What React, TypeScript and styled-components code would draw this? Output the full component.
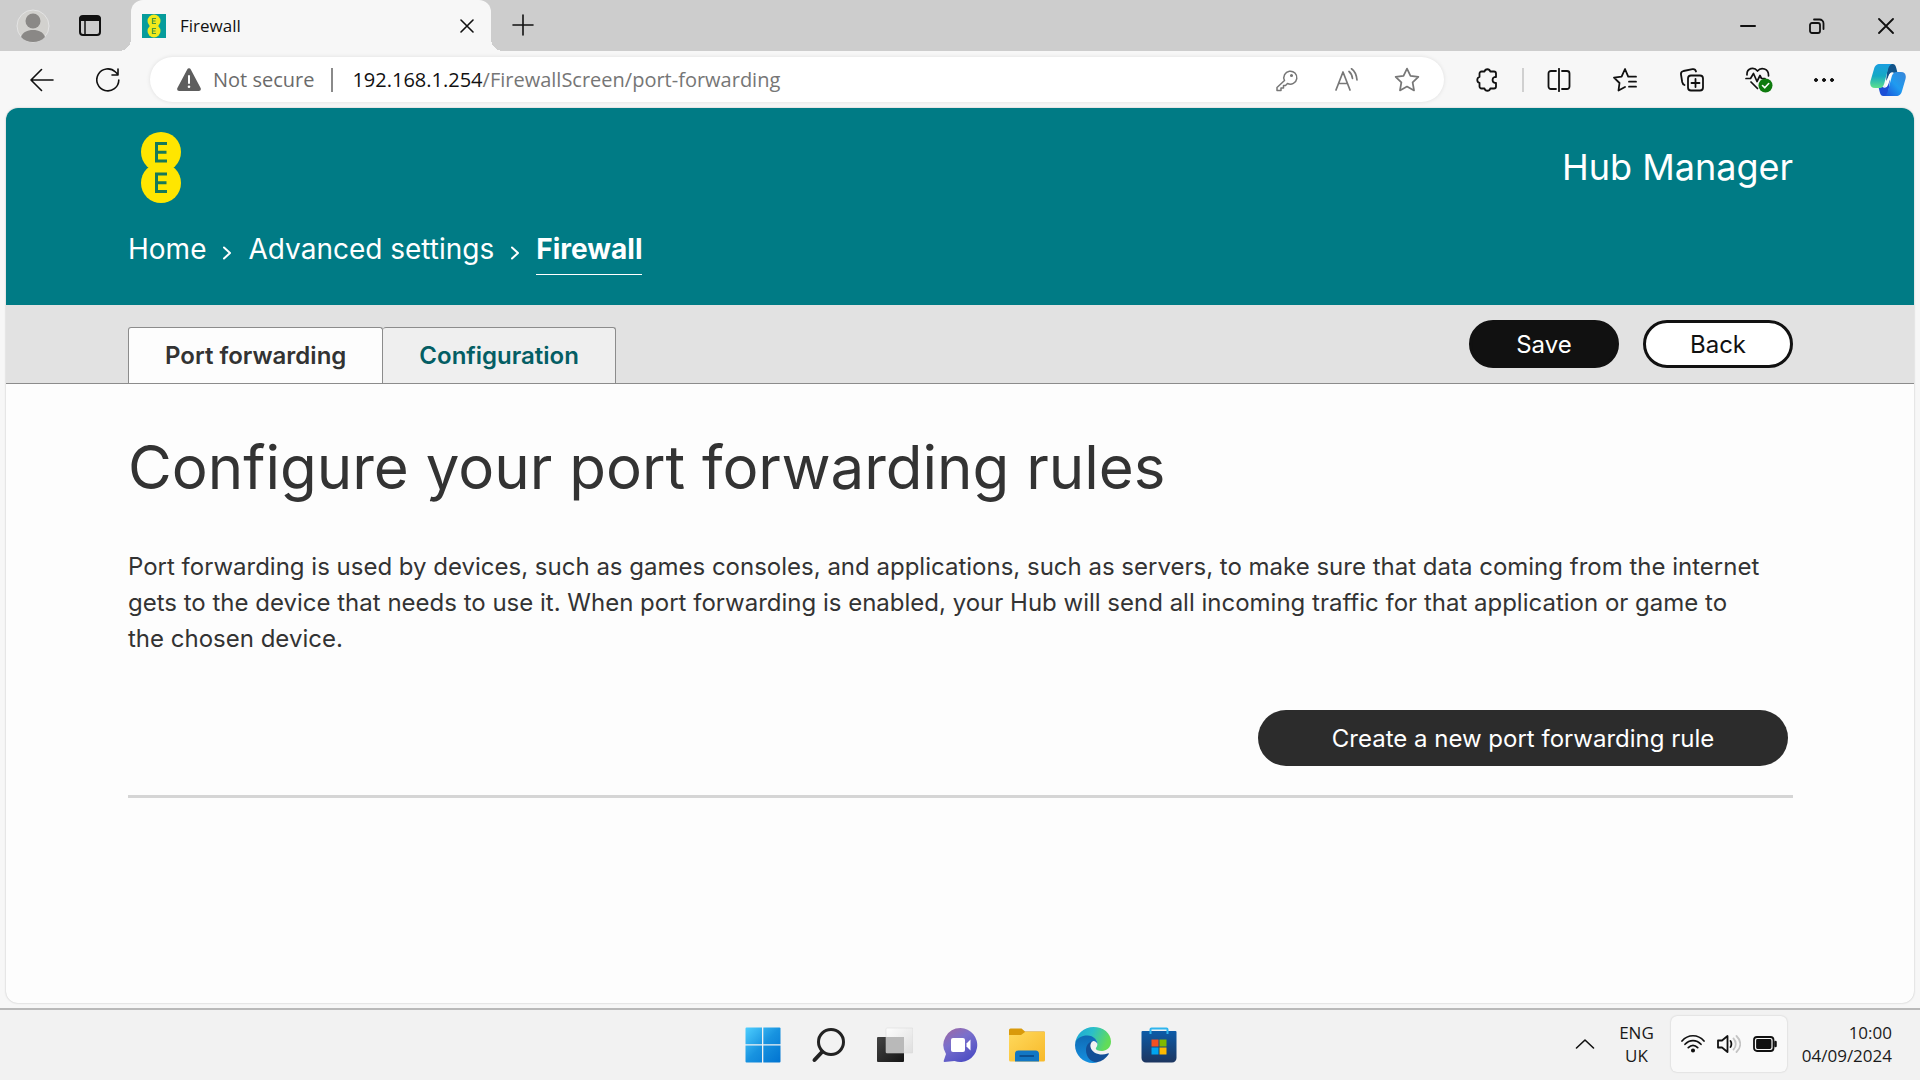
import React, { useState } from "react";
import styled, { createGlobalStyle } from "styled-components";

const BODY = `Inter, "Liberation Sans", sans-serif`;
const UI = `"Open Sans", "Noto Sans", sans-serif`;

const Global = createGlobalStyle`
  * { box-sizing: border-box; }
  html, body, #root { height: 100%; }
  body { margin: 0; background: #f7f7f7; font-family: ${UI}; color: #1a1a1a; }
  button { font: inherit; color: inherit; background: none; border: 0; padding: 0; cursor: pointer; }
  a { color: inherit; text-decoration: none; }
  svg { display: block; flex: none; }
`;

const Screen = styled.div`
  min-height: 100%;
  display: flex;
  flex-direction: column;
`;

/* ---------- browser chrome ---------- */
const TitleBar = styled.header`
  height: 51px;
  background: #cdcdcd;
  display: flex;
  align-items: stretch;
`;
const TitleTools = styled.div`
  width: 131px;
  padding-left: 16px;
  display: flex;
  align-items: center;
  gap: 28px;
`;
const Tab = styled.div`
  position: relative;
  width: 360px;
  padding: 0 14px 0 11px;
  display: flex;
  align-items: center;
  gap: 14px;
  background: #f7f7f7;
  border-radius: 12px 12px 0 0;
  font-size: 17px;
  color: #111;
  &::before, &::after {
    content: "";
    position: absolute;
    bottom: 0;
    width: 12px;
    height: 12px;
  }
  &::before { left: -12px; background: radial-gradient(circle at 0 0, #cdcdcd 12px, #f7f7f7 12px); }
  &::after { right: -12px; background: radial-gradient(circle at 100% 0, #cdcdcd 12px, #f7f7f7 12px); }
`;
const TabTitle = styled.span`flex: 1;`;
const IconButton = styled.button<{ $w?: number }>`
  width: ${(p) => p.$w ?? 24}px;
  height: 40px;
  flex: none;
  display: flex;
  align-items: center;
  justify-content: center;
`;
const NewTab = styled(IconButton)`
  margin-left: 20px;
  height: 50px;
`;
const WindowButtons = styled.div`
  margin-left: auto;
  display: flex;
  align-items: center;
`;
const ToolBar = styled.div`
  height: 57px;
  display: flex;
  align-items: center;
`;
const NavButtons = styled.div`
  width: 150px;
  padding-left: 30px;
  display: flex;
  gap: 42px;
`;
const Omnibox = styled.div`
  flex: 1;
  height: 45px;
  border-radius: 23px;
  background: #fff;
  box-shadow: 0 0 4px rgba(0, 0, 0, 0.1);
  padding: 0 7px 0 27px;
  display: flex;
  align-items: center;
  font-size: 20px;
  color: #6b6b6b;
  white-space: nowrap;
`;
const Security = styled.button`
  display: flex;
  align-items: center;
  gap: 12px;
  padding-right: 17px;
`;
const Bar = styled.span<{ $light?: boolean }>`
  width: 2px;
  height: 24px;
  flex: none;
  background: ${(p) => (p.$light ? "#d0d0d0" : "#8a8a8a")};
`;
const Url = styled.div`
  flex: 1;
  padding-left: 19px;
  color: #767676;
  b { font-weight: 400; color: #111; }
`;
const Extensions = styled.div`
  padding-left: 10px;
  display: flex;
  align-items: center;
`;

/* ---------- router page ---------- */
const Page = styled.main`
  flex: 1;
  margin: 0 6px 5px;
  border-radius: 12px;
  overflow: hidden;
  background: #fdfdfd;
  box-shadow: 0 0 2px rgba(0, 0, 0, 0.25);
  font-family: ${BODY};
  color: #333;
`;
const Masthead = styled.div`
  height: 197px;
  padding: 24px 121px 0 122px;
  background: #007b85;
  color: #fff;
`;
const BrandRow = styled.div`
  display: flex;
  align-items: center;
  justify-content: space-between;
  padding-left: 13px;
  height: 71px;
`;
const Product = styled.span`
  padding-bottom: 2px;
  font-size: 36px;
  line-height: 44px;
`;
const Crumbs = styled.nav`
  margin-top: 24px;
  display: flex;
  align-items: flex-start;
  gap: 16px;
  font-size: 28px;
  line-height: 44px;
`;
const Crumb = styled.a<{ $current?: boolean }>`
  height: 48px;
  font-weight: ${(p) => (p.$current ? 700 : 400)};
  border-bottom: 1px solid ${(p) => (p.$current ? "#fff" : "transparent")};
`;
const CrumbSep = styled.span`
  height: 51px;
  display: flex;
  align-items: center;
`;
const ActionBar = styled.div`
  height: 79px;
  padding: 0 121px 0 122px;
  background: #e2e2e2;
  border-bottom: 1px solid #8c8c8c;
  display: flex;
  justify-content: space-between;
`;
const Tabs = styled.div`
  display: flex;
  align-items: flex-end;
`;
const PageTab = styled.button<{ $active: boolean }>`
  height: 56px;
  padding: 0 36px;
  border: 1px solid #8c8c8c;
  border-bottom: 0;
  border-radius: 3px 3px 0 0;
  background: ${(p) => (p.$active ? "#fdfdfd" : "#efefef")};
  color: ${(p) => (p.$active ? "#333" : "#045e64")};
  font-size: 24px;
  font-weight: 600;
  & + & { border-left: 0; }
`;
const Actions = styled.div`
  display: flex;
  align-items: center;
  gap: 24px;
`;
const Pill = styled.button<{ $kind: "solid" | "outline" }>`
  width: 150px;
  height: 48px;
  border-radius: 24px;
  border: 3px solid #111;
  background: ${(p) => (p.$kind === "solid" ? "#111" : "#fff")};
  color: ${(p) => (p.$kind === "solid" ? "#fff" : "#111")};
  font-size: 24px;
`;
const Content = styled.section`
  padding: 47px 121px 0 122px;
`;
const Heading = styled.h1`
  margin: 0;
  font-size: 60px;
  line-height: 72px;
  font-weight: 400;
`;
const Intro = styled.p`
  margin: 46px 0 0;
  padding-right: 28px;
  font-size: 24px;
  line-height: 36px;
`;
const RuleRow = styled.div`
  margin-top: 53px;
  padding: 0 5px 29px 0;
  border-bottom: 3px solid #d5d5d5;
  display: flex;
  justify-content: flex-end;
`;
const CreateButton = styled.button`
  width: 530px;
  height: 56px;
  border-radius: 28px;
  background: #2c2c2c;
  color: #fff;
  font-size: 24px;
`;

/* ---------- taskbar ---------- */
const Taskbar = styled.footer`
  height: 72px;
  background: #f2f2f2;
  border-top: 2px solid #b9b9b9;
  display: grid;
  grid-template-columns: 1fr auto 1fr;
  align-items: center;
`;
const Apps = styled.div`
  grid-column: 2;
  padding-left: 2px;
  display: flex;
  gap: 30px;
`;
const AppButton = styled.button`
  width: 36px;
  height: 36px;
`;
const Tray = styled.div`
  padding: 0 28px 2px 0;
  display: flex;
  align-items: center;
  justify-content: flex-end;
  font-size: 17px;
  line-height: 23px;
`;
const Language = styled.button`
  margin: 0 17px 0 24px;
  text-align: center;
`;
const Quick = styled.button`
  height: 56px;
  padding: 0 10px;
  border-radius: 6px;
  background: #f9f9f9;
  box-shadow: 0 0 2px rgba(0, 0, 0, 0.2);
  display: flex;
  align-items: center;
  gap: 12px;
`;
const Clock = styled.button`
  margin-left: 15px;
  text-align: right;
`;

/* ---------- icons ---------- */
type LineProps = { w?: number; h?: number; box?: string; c?: string; sw?: number; children: React.ReactNode };
const Line = ({ w = 24, h = 24, box = "0 0 24 24", c = "#111", sw = 1.6, children }: LineProps) => (
  <svg width={w} height={h} viewBox={box} fill="none" stroke={c} strokeWidth={sw} strokeLinecap="round" strokeLinejoin="round" aria-hidden="true">
    {children}
  </svg>
);

const Avatar = () => (
  <svg width="34" height="36" viewBox="0 0 34 36" aria-hidden="true">
    <circle cx="17" cy="18" r="16" fill="#d2d1ce" stroke="#e4e4e4" />
    <circle cx="17" cy="13" r="7.5" fill="#8a8886" />
    <path d="M5 29c2-5 6-7 12-7s10 2 12 7c-3 3.500-7 5-12 5s-9-1.500-12-5z" fill="#8a8886" />
  </svg>
);
const EELogo = () => (
  <svg width="40" height="71" viewBox="0 0 40 71" aria-hidden="true">
    <g fill="#ffe600"><circle cx="20" cy="20" r="20" /><circle cx="20" cy="51" r="20" /></g>
    <g fill="none" stroke="#16795a" strokeWidth="3">
      <path d="M26 11.500H15.500V29H26M15.500 20.200H25.500" />
      <path d="M26 42H15.500V59.500H26M15.500 50.700H25.500" />
    </g>
  </svg>
);
const Favicon = () => (
  <svg width="24" height="24" viewBox="0 0 24 24" aria-hidden="true">
    <path fill="#069c9c" d="M0 0h24v24H0z" />
    <g fill="#f2ea1c"><circle cx="12" cy="7" r="6.500" /><circle cx="12" cy="17" r="6.500" /></g>
    <path d="M14 4.500h-3.500v5H14M10.500 7h3M14 14.500h-3.500v5H14M10.500 17h3" fill="none" stroke="#4b9a3a" strokeWidth="1.200" />
  </svg>
);
const Copilot = () => (
  <svg width="36" height="34" viewBox="0 0 36 34" aria-hidden="true">
    <defs>
      <linearGradient id="cpa" x1="0" y1="0" x2="0" y2="1"><stop offset="0" stopColor="#1b9fe0" /><stop offset=".5" stopColor="#14a9c4" /><stop offset="1" stopColor="#5fe08c" /></linearGradient>
      <linearGradient id="cpb" x1="0" y1="1" x2="1" y2="0"><stop offset="0" stopColor="#1a4fd8" /><stop offset=".5" stopColor="#1f9bf0" /><stop offset="1" stopColor="#3a86d8" /></linearGradient>
    </defs>
    <path d="M18 1h4.500c2.500 0 3.300 2 3.900 4.500L27.500 10H22.500c-2.500 0-3.500 1.500-4.300 4L16 18z" fill="#12548a" />
    <path d="M18 33h-4.500c-2.500 0-3.300-2-3.900-4.500L8.500 24h5c2.500 0 3.500-1.500 4.300-4L20 16z" fill="#1c4fd6" />
    <path d="M10 1h12c-2.500 1-3.400 3-4.200 6l-3.400 13c-.8 3-2 5-5.200 5H5c-4 0-5.500-3-4.500-7L4 6c1-3.500 2.500-5 6-5z" fill="url(#cpa)" />
    <path d="M26 33H14c2.500-1 3.400-3 4.200-6l3.400-13c.8-3 2-5 5.200-5H31c4 0 5.500 3 4.500 7L32 28c-1 3.500-2.500 5-6 5z" fill="url(#cpb)" />
    <path d="M26.500 9.300h-4c-2.300 0-3.200 1.500-4 4.500l-1.300 5c-.9 3.400-1.500 5.100-4.500 5.900 3.200.600 5-.900 5.900-4.200l2.500-8.500c.8-2.300 2.400-2.700 5.400-2.700z" fill="#fff" />
  </svg>
);
const HeartCheck = () => (
  <svg width="28" height="26" viewBox="0 0 28 26" fill="none" strokeLinecap="round" strokeLinejoin="round" aria-hidden="true">
    <g stroke="#111" strokeWidth="1.700">
      <path d="M2 8C1.500 1 9-.500 12.500 4 16-.500 24 1.500 23.500 9" />
      <path d="M1 11.500h4.500l3-5 3.500 8 3-6 1.500 3H20" />
      <path d="M6 15l6.500 6.500" />
    </g>
    <circle cx="20.500" cy="18.500" r="7" fill="#0f7b0f" />
    <path d="M17.500 18.500l2.200 2.300 4-4.300" stroke="#fff" strokeWidth="1.600" />
  </svg>
);
const StartIcon = () => (
  <svg width="36" height="36" viewBox="0 0 36 36" aria-hidden="true">
    <defs><linearGradient id="win" gradientUnits="userSpaceOnUse" x1="0" y1="0" x2="36" y2="36"><stop offset="0" stopColor="#4fd0ff" /><stop offset=".5" stopColor="#1893e0" /><stop offset="1" stopColor="#0072d0" /></linearGradient></defs>
    <g fill="url(#win)">
      <path d="M1.500.500H17v16.700H.500V1.500a1 1 0 0 1 1-1z" /><path d="M18.300.500H34.500a1 1 0 0 1 1 1v15.700H18.300z" />
      <path d="M.500 18.500H17v17H1.500a1 1 0 0 1-1-1z" /><path d="M18.300 18.500h17.200v16a1 1 0 0 1-1 1H18.300z" />
    </g>
  </svg>
);
const SearchIcon = () => (
  <svg width="36" height="36" viewBox="0 0 36 36" fill="none" stroke="#222" strokeLinecap="round" aria-hidden="true">
    <circle cx="20" cy="15" r="12.500" strokeWidth="3" /><path d="M11 25L3.500 33" strokeWidth="4" />
  </svg>
);
const TaskViewIcon = () => (
  <svg width="36" height="36" viewBox="0 0 36 36" aria-hidden="true">
    <defs>
      <linearGradient id="tv" x1="0" y1="0" x2="1" y2="1"><stop offset="0" stopColor="#444" /><stop offset="1" stopColor="#151515" /></linearGradient>
      <linearGradient id="tw" x1="0" y1="0" x2="1" y2="1"><stop offset="0" stopColor="#fdfdfd" /><stop offset="1" stopColor="#dedede" /></linearGradient>
    </defs>
    <rect x="0" y="10" width="27" height="25" rx="1" fill="url(#tv)" />
    <rect x="9" y="1" width="27" height="25" rx="1" fill="url(#tw)" stroke="#d6d6d6" strokeWidth=".500" />
    <rect x="9" y="10" width="18" height="16" fill="#b9b9b9" />
  </svg>
);
const ChatIcon = () => (
  <svg width="36" height="36" viewBox="0 0 36 36" aria-hidden="true">
    <defs><linearGradient id="ch" x1="0" y1="0" x2=".6" y2="1"><stop offset="0" stopColor="#a2679f" /><stop offset=".45" stopColor="#7a70cc" /><stop offset="1" stopColor="#4f4fc4" /></linearGradient></defs>
    <path d="M17.500 1a17 17 0 1 1-6 33L1.500 35c-1 0-1-1-.600-1.800L3 27A17 17 0 0 1 17.500 1z" fill="url(#ch)" />
    <rect x="8" y="11" width="14" height="14" rx="2" fill="#fff" /><path d="M23.500 16.500l4-4v11l-4-4z" fill="#fff" />
  </svg>
);
const FolderIcon = () => (
  <svg width="36" height="36" viewBox="0 0 36 36" aria-hidden="true">
    <defs><linearGradient id="fo" x1="0" y1="0" x2="1" y2="1"><stop offset="0" stopColor="#ffd95c" /><stop offset="1" stopColor="#f7b92a" /></linearGradient></defs>
    <path d="M0 3a1.500 1.500 0 0 1 1.500-1.500h11L16 4.500h19a1 1 0 0 1 1 1V12H0z" fill="#d99a0b" />
    <path d="M0 8h12l4-3h20v28a1.500 1.500 0 0 1-1.500 1.500h-33A1.500 1.500 0 0 1 0 33z" fill="url(#fo)" />
    <path d="M6 34.500V27a3.500 3.500 0 0 1 3.500-3.500h17A3.500 3.500 0 0 1 30 27v7.500z" fill="#1277c4" />
    <path d="M10.500 29h14.500" stroke="#0b4c8c" strokeWidth="1.800" />
  </svg>
);
const EdgeIcon = () => (
  <svg width="36" height="36" viewBox="0 0 36 36" aria-hidden="true">
    <defs>
      <linearGradient id="eg1" x1="0" y1="0" x2="1" y2=".3"><stop offset="0" stopColor="#1ba4d8" /><stop offset=".5" stopColor="#2bbfc9" /><stop offset="1" stopColor="#62dc58" /></linearGradient>
      <linearGradient id="eg2" x1="0" y1="0" x2="0" y2="1"><stop offset="0" stopColor="#0f6ab4" /><stop offset="1" stopColor="#1590e0" /></linearGradient>
    </defs>
    <path d="M0 17C1 7 9 0 18.500 0 28 0 36 6 36 14.500c0 6-4.500 9.500-9 9.500-4 0-6.200-1.200-6.200-2.500 0-.900 1.600-1.500 1.600-4.500 0-3.500-3-7-8-7C7 10 1 13 0 17z" fill="url(#eg1)" />
    <path d="M0 18C.500 11 6.500 8.500 12.500 8.500c6 0 10 4.500 10 8.500-1-2-2.500-3-4-3-3 0-5 4-5 8.500 0 7 5 12 9 12.500-1.500.700-3 1-4.500 1C8 36 0 28 0 18z" fill="url(#eg2)" />
    <path d="M18 14c-3.500.500-7 4-7 9 0 7 5 12.500 11 12.300 5-1 9-4 11.700-8 .4-.700-.2-1.200-1-.800C26.500 29 17 27 15.500 20c-.5-2.500.500-5 2.500-6z" fill="#124f97" />
  </svg>
);
const StoreIcon = () => (
  <svg width="36" height="36" viewBox="0 0 36 36" aria-hidden="true">
    <defs><linearGradient id="st" x1="0" y1="0" x2="0" y2="1"><stop offset="0" stopColor="#0d5ba8" /><stop offset="1" stopColor="#1d3660" /></linearGradient></defs>
    <path d="M.500 5a1 1 0 0 1 1-1h33a1 1 0 0 1 1 1v26a4.500 4.500 0 0 1-4.500 4.500H5A4.500 4.500 0 0 1 .500 31z" fill="url(#st)" />
    <path d="M9.500 7V2.500a1 1 0 0 1 1-1h15a1 1 0 0 1 1 1V7" fill="none" stroke="#2fb5ee" strokeWidth="2" />
    <path d="M10.500 12.500h7v7h-7z" fill="#f25022" /><path d="M18.500 12.500h7v7h-7z" fill="#7fba00" />
    <path d="M10.500 20.500h7v7h-7z" fill="#00a4ef" /><path d="M18.500 20.500h7v7h-7z" fill="#ffb900" />
  </svg>
);

const apps: [string, () => React.ReactElement][] = [
  ["Start", StartIcon], ["Search", SearchIcon], ["Task view", TaskViewIcon], ["Chat", ChatIcon],
  ["File Explorer", FolderIcon], ["Edge", EdgeIcon], ["Store", StoreIcon],
];

const STAR = "M12 1.500l3.200 6.700 7.300 1-5.300 5.100 1.300 7.300L12 18.100l-6.500 3.500 1.300-7.300L1.500 9.200l7.300-1z";

export default function App() {
  const [tab, setTab] = useState("Port forwarding");
  return (
    <>
      <Global />
      <Screen>
        <TitleBar>
          <TitleTools>
            <IconButton $w={34} aria-label="Profile"><Avatar /></IconButton>
            <IconButton aria-label="Workspaces">
              <Line sw={2}>
                <rect x="2" y="2" width="20" height="19" rx="3" /><path d="M3 5h18" strokeWidth="4" /><path d="M7 7v14" strokeWidth="1.500" />
              </Line>
            </IconButton>
          </TitleTools>
          <Tab>
            <Favicon />
            <TabTitle>Firewall</TabTitle>
            <IconButton aria-label="Close tab" $w={20}><Line w={14} h={14} box="0 0 14 14"><path d="M1 1l12 12M13 1L1 13" /></Line></IconButton>
          </Tab>
          <NewTab aria-label="New tab"><Line w={22} h={22} box="0 0 22 22"><path d="M11 1v20M1 11h20" /></Line></NewTab>
          <WindowButtons>
            <IconButton $w={69} aria-label="Minimise"><Line w={16} h={16} box="0 0 16 16" sw={2}><path d="M1 8h14" /></Line></IconButton>
            <IconButton $w={69} aria-label="Restore"><Line w={16} h={16} box="0 0 16 16" sw={1.8}><rect x="1" y="5" width="10" height="10" rx="2" /><path d="M5 1.500h5.500a4 4 0 0 1 4 4V11" /></Line></IconButton>
            <IconButton $w={69} aria-label="Close"><Line w={16} h={16} box="0 0 16 16" sw={1.8}><path d="M1 1l14 14M15 1L1 15" /></Line></IconButton>
          </WindowButtons>
        </TitleBar>

        <ToolBar>
          <NavButtons>
            <IconButton aria-label="Back"><Line><path d="M23 12H1M11.500 1.500L1 12l10.500 10.500" /></Line></IconButton>
            <IconButton aria-label="Reload"><Line><path d="M22.800 12A11 11 0 1 1 19.500 4l2.500 2.500M22 1v6h-6" /></Line></IconButton>
          </NavButtons>
          <Omnibox>
            <Security>
              <svg width="24" height="24" viewBox="0 0 24 24" aria-hidden="true">
                <path d="M10.200 1.500a2 2 0 0 1 3.600 0l9.800 18.400c.7 1.500-.1 3.100-1.800 3.100H2.200C.5 23-.3 21.400.4 19.900z" fill="#5e5e5e" />
                <path d="M12 8v7" stroke="#fff" strokeWidth="2" strokeLinecap="round" /><circle cx="12" cy="18.800" r="1.300" fill="#fff" />
              </svg>
              Not secure
            </Security>
            <Bar />
            <Url><b>192.168.1.254</b>/FirewallScreen/port-forwarding</Url>
            <IconButton $w={60} aria-label="Passwords"><Line c="#777" sw={1.5}><path d="M9.500 12.500L2 19.500V22.500h4v-2.500h2.500v-2.500h2l2-2a6.500 6.500 0 1 0-3-3z" /><circle cx="16.500" cy="7.500" r=".8" /></Line></IconButton>
            <IconButton $w={60} aria-label="Read aloud"><Line c="#777" sw={1.7}><path d="M1 22L8 4l7 18M3.500 15.500h9M14 3.500c2 1.500 3 3.500 3.500 7M16.500.8c3.500 2.500 5 6 5.500 11.200" /></Line></IconButton>
            <IconButton $w={60} aria-label="Add favourite"><Line w={26} h={26} c="#777" sw={1.6}><path d={STAR} /></Line></IconButton>
          </Omnibox>
          <Extensions>
            <IconButton $w={66} aria-label="Extensions"><Line sw={1.8}><path d="M6.500 3.500H9.500a3 3 0 0 1 5.800 0H19a2 2 0 0 1 2 2V9h-1.200a3 3 0 0 0 0 5.800H21v3.700a2 2 0 0 1-2 2h-3.700a3 3 0 0 1-5.800 0H6.500a2 2 0 0 1-2-2V14.800a3 3 0 0 1 0-5.800V5.500a2 2 0 0 1 2-2z" /></Line></IconButton>
            <IconButton $w={6} as="span"><Bar $light /></IconButton>
            <IconButton $w={66} aria-label="Split screen"><Line sw={1.8}><path d="M9 3H4a2.500 2.500 0 0 0-2.500 2.500v13A2.500 2.500 0 0 0 4 21h5M15 3h5a2.500 2.500 0 0 1 2.500 2.500v13A2.500 2.500 0 0 1 20 21h-5M12 .8v22.400" /></Line></IconButton>
            <IconButton $w={66} aria-label="Favourites"><Line sw={1.8}><path d="M23 8.700h-7.800L12 1 8.600 8.700l-7.600 1 5.500 5.300-1 7.500 6.500-3.500M16 13.700h7M16 18.700h7" /></Line></IconButton>
            <IconButton $w={68} aria-label="Collections"><Line sw={1.8}><rect x="8" y="7.500" width="15" height="15" rx="3" /><path d="M15.500 11v8M11.500 15h8M4.500 17C3 16.500 2.500 15.500 2.200 14L1 6.500C.7 4.500 1.500 3.500 3.500 3l9-1.800c2-.4 3 .3 3.500 2.300" /></Line></IconButton>
            <IconButton $w={66} aria-label="Browser essentials"><HeartCheck /></IconButton>
            <IconButton $w={64} aria-label="More"><Line><g fill="#111" strokeWidth="1"><circle cx="4" cy="12" r="1.500" /><circle cx="12" cy="12" r="1.500" /><circle cx="20" cy="12" r="1.500" /></g></Line></IconButton>
            <IconButton $w={64} aria-label="Copilot"><Copilot /></IconButton>
          </Extensions>
        </ToolBar>

        <Page>
          <Masthead>
            <BrandRow><EELogo /><Product>Hub Manager</Product></BrandRow>
            <Crumbs aria-label="Breadcrumb">
              <Crumb href="#home">Home</Crumb>
              <CrumbSep><Line w={10} h={14} box="0 0 10 14" c="#fff" sw={2}><path d="M2 1.500L8 7l-6 5.500" /></Line></CrumbSep>
              <Crumb href="#advanced">Advanced settings</Crumb>
              <CrumbSep><Line w={10} h={14} box="0 0 10 14" c="#fff" sw={2}><path d="M2 1.500L8 7l-6 5.500" /></Line></CrumbSep>
              <Crumb href="#firewall" $current aria-current="page">Firewall</Crumb>
            </Crumbs>
          </Masthead>
          <ActionBar>
            <Tabs role="tablist">
              {["Port forwarding", "Configuration"].map((name) => (
                <PageTab key={name} role="tab" aria-selected={tab === name} $active={tab === name} onClick={() => setTab(name)}>{name}</PageTab>
              ))}
            </Tabs>
            <Actions>
              <Pill $kind="solid">Save</Pill>
              <Pill $kind="outline">Back</Pill>
            </Actions>
          </ActionBar>
          <Content>
            <Heading>Configure your port forwarding rules</Heading>
            <Intro>
              Port forwarding is used by devices, such as games consoles, and applications, such as servers, to make sure that data coming from the internet gets to the device that needs to use it. When port forwarding is enabled, your Hub will send all incoming traffic for that application or game to the chosen device.
            </Intro>
            <RuleRow><CreateButton>Create a new port forwarding rule</CreateButton></RuleRow>
          </Content>
        </Page>

        <Taskbar>
          <Apps>
            {apps.map(([name, Icon]) => <AppButton key={name} aria-label={name}><Icon /></AppButton>)}
          </Apps>
          <Tray>
            <IconButton aria-label="Hidden icons" $w={20}><Line w={20} h={12} box="0 0 20 12"><path d="M1.500 10L10 2l8.500 8" /></Line></IconButton>
            <Language>ENG<br />UK</Language>
            <Quick aria-label="Network, volume and battery">
              <Line sw={1.7}><path d="M1 9C7 2 17 2 23 9M4 12.300c4.500-5 11.500-5 16 0M7.300 15.700c3-3.200 6.400-3.200 9.400 0" /><circle cx="12" cy="18.500" r="1.200" fill="#111" /></Line>
              <Line sw={1.8}><path d="M1 8.500h4L10.500 4v16L5 15.500H1zM13.500 9c1.200 1.500 1.200 4.500 0 6" /><path d="M16.500 6.500c3 3 3 8 0 11M19.500 4c5 5 5 11 0 16" stroke="#c4c4c4" /></Line>
              <Line sw={1.8}><rect x="1" y="5" width="19.500" height="14" rx="3" /><rect x="4" y="8" width="13.500" height="8" rx=".5" fill="#111" /><path d="M22.500 10v4" strokeWidth="2.500" /></Line>
            </Quick>
            <Clock>10:00<br />04/09/2024</Clock>
          </Tray>
        </Taskbar>
      </Screen>
    </>
  );
}
